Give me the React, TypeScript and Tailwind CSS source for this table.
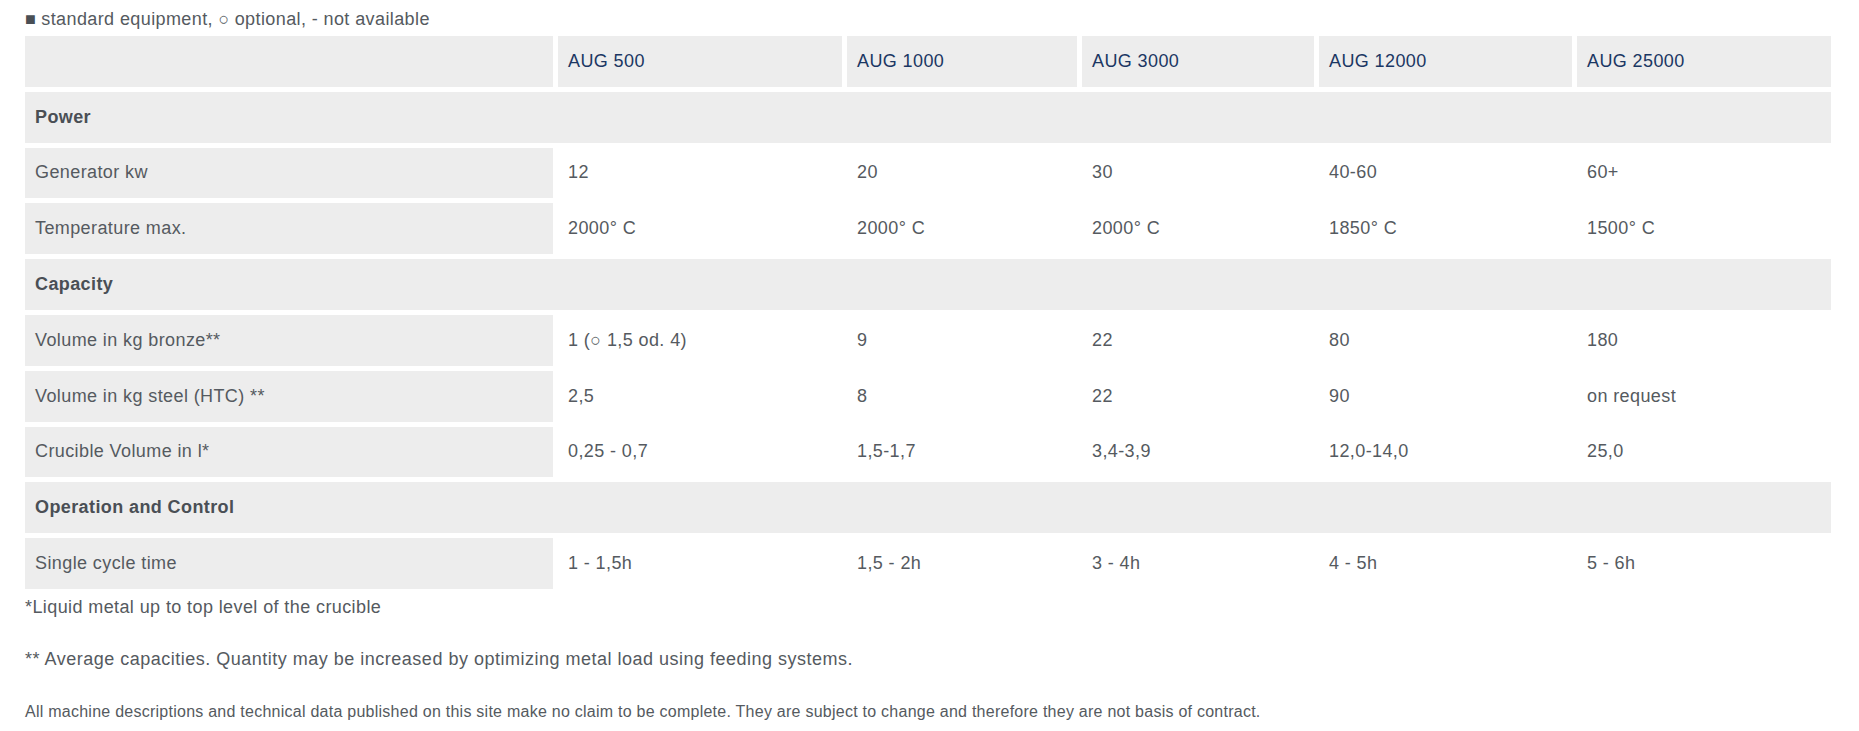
import React from "react";

type Row =
  | { kind: "section"; title: string }
  | { kind: "data"; label: string; values: string[] };

const models = ["AUG 500", "AUG 1000", "AUG 3000", "AUG 12000", "AUG 25000"];

const rows: Row[] = [
  { kind: "section", title: "Power" },
  { kind: "data", label: "Generator kw", values: ["12", "20", "30", "40-60", "60+"] },
  {
    kind: "data",
    label: "Temperature max.",
    values: ["2000° C", "2000° C", "2000° C", "1850° C", "1500° C"],
  },
  { kind: "section", title: "Capacity" },
  {
    kind: "data",
    label: "Volume in kg bronze**",
    values: ["1 (○ 1,5 od. 4)", "9", "22", "80", "180"],
  },
  {
    kind: "data",
    label: "Volume in kg steel (HTC) **",
    values: ["2,5", "8", "22", "90", "on request"],
  },
  {
    kind: "data",
    label: "Crucible Volume in l*",
    values: ["0,25 - 0,7", "1,5-1,7", "3,4-3,9", "12,0-14,0", "25,0"],
  },
  { kind: "section", title: "Operation and Control" },
  {
    kind: "data",
    label: "Single cycle time",
    values: ["1 - 1,5h", "1,5 - 2h", "3 - 4h", "4 - 5h", "5 - 6h"],
  },
];

export default function App() {
  return (
    <div className="min-h-[731px] w-[1859px] bg-white pl-[20px] font-['Liberation_Sans',Arial,sans-serif] text-[18px] tracking-[0.4px] text-[#555a60]">
      <p className="h-[31px] pl-[5px] pt-[8px] leading-[23px]">
        <span className="tracking-normal text-[#4a4f55]">■</span> standard equipment,{" "}
        <span className="tracking-normal">○</span> optional, - not available
      </p>
      <table className="w-[1816px] table-fixed border-separate border-spacing-[5px]">
        <colgroup>
          <col className="w-[528px]" />
          <col className="w-[284px]" />
          <col className="w-[230px]" />
          <col className="w-[232px]" />
          <col className="w-[253px]" />
          <col className="w-[254px]" />
        </colgroup>
        <thead>
          <tr>
            <th className="h-[50.8px] bg-[#ededed] p-0" />
            {models.map((m) => (
              <th
                key={m}
                className="h-[50.8px] bg-[#ededed] px-[10px] py-0 text-left font-normal text-[#1b3763]"
              >
                {m}
              </th>
            ))}
          </tr>
        </thead>
        <tbody>
          {rows.map((r, i) =>
            r.kind === "section" ? (
              <tr key={i}>
                <td
                  colSpan={6}
                  className="h-[50.8px] bg-[#ededed] px-[10px] py-0 font-bold text-[#4a4f55]"
                >
                  {r.title}
                </td>
              </tr>
            ) : (
              <tr key={i}>
                <td className="h-[50.8px] bg-[#ededed] px-[10px] py-0">{r.label}</td>
                {r.values.map((v, j) => (
                  <td key={j} className="h-[50.8px] px-[10px] py-0">
                    {v}
                  </td>
                ))}
              </tr>
            )
          )}
        </tbody>
      </table>
      <p className="pl-[5px] leading-[27px]">*Liquid metal up to top level of the crucible</p>
      <p className="mt-[25px] pl-[5px] leading-[27px] tracking-[0.5px]">
        ** Average capacities. Quantity may be increased by optimizing metal load using feeding
        systems.
      </p>
      <p className="mt-[28px] pl-[5px] text-[16px] leading-[22px] tracking-[0.25px]">
        All machine descriptions and technical data published on this site make no claim to be
        complete. They are subject to change and therefore they are not basis of contract.
      </p>
    </div>
  );
}
